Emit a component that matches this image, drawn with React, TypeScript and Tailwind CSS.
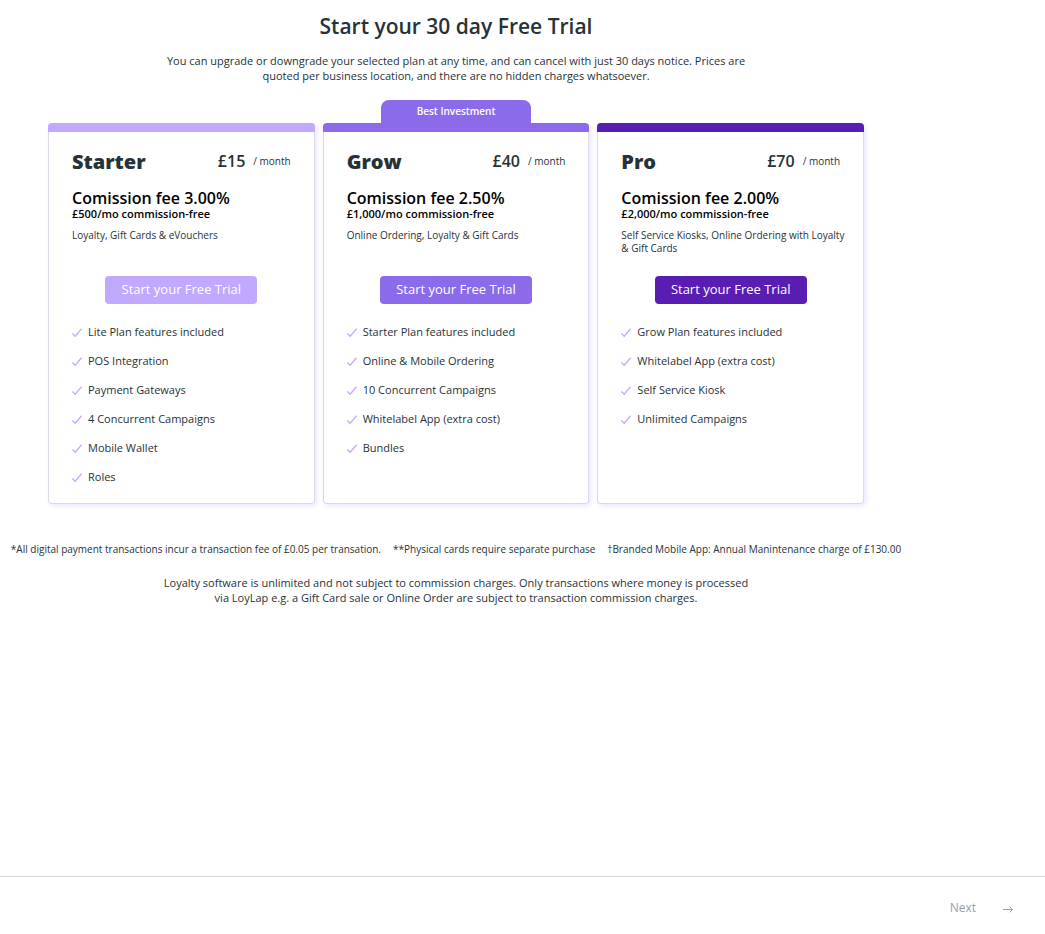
type Plan = {
  name: string;
  price: string;
  fee: string;
  allowance: string;
  summary: string;
  features: string[];
  bar: string;
  button: string;
  badge?: string;
};

const plans: Plan[] = [
  {
    name: "Starter",
    price: "£15",
    fee: "Comission fee 3.00%",
    allowance: "£500/mo commission-free",
    summary: "Loyalty, Gift Cards & eVouchers",
    features: [
      "Lite Plan features included",
      "POS Integration",
      "Payment Gateways",
      "4 Concurrent Campaigns",
      "Mobile Wallet",
      "Roles",
    ],
    bar: "bg-[#c1a9ff]",
    button: "bg-[#c1a9ff]",
  },
  {
    name: "Grow",
    price: "£40",
    fee: "Comission fee 2.50%",
    allowance: "£1,000/mo commission-free",
    summary: "Online Ordering, Loyalty & Gift Cards",
    features: [
      "Starter Plan features included",
      "Online & Mobile Ordering",
      "10 Concurrent Campaigns",
      "Whitelabel App (extra cost)",
      "Bundles",
    ],
    bar: "bg-[#8c6bea]",
    button: "bg-[#8c6bea]",
    badge: "Best Investment",
  },
  {
    name: "Pro",
    price: "£70",
    fee: "Comission fee 2.00%",
    allowance: "£2,000/mo commission-free",
    summary: "Self Service Kiosks, Online Ordering with Loyalty & Gift Cards",
    features: [
      "Grow Plan features included",
      "Whitelabel App (extra cost)",
      "Self Service Kiosk",
      "Unlimited Campaigns",
    ],
    bar: "bg-[#591db1]",
    button: "bg-[#591db1]",
  },
];

function Check() {
  return (
    <svg className="h-[10px] w-[10px] shrink-0" viewBox="0 0 10 10" fill="none" aria-hidden="true">
      <path d="M0.4 5.4 3.2 8.2 9.6 0.6" stroke="#c1a9ff" strokeWidth="1.3" />
    </svg>
  );
}

function PlanCard({ plan }: { plan: Plan }) {
  return (
    <article className="relative flex flex-1 flex-col rounded border border-t-0 border-[#d8dae6] shadow-[2px_2px_5px_rgba(193,169,255,0.3)]">
      {plan.badge && (
        <div className="absolute bottom-full left-1/2 flex h-[23px] w-[150px] -translate-x-1/2 items-center justify-center rounded-t-lg bg-[#8c6bea] text-[10px] font-semibold text-white">
          {plan.badge}
        </div>
      )}
      <div className={`-mx-px h-[9px] rounded-t ${plan.bar}`} />
      <div className="px-[23px] pt-[18px] pb-[11px]">
        <div className="flex items-start justify-between">
          <h2 className="text-[20px] leading-6 font-extrabold">{plan.name}</h2>
          <p className="flex items-center gap-2 leading-[22px]">
            <span className="text-[16px] font-semibold">{plan.price}</span>
            <span className="text-[10px]">/ month</span>
          </p>
        </div>
        <p className="mt-[14px] text-[16px] leading-5 font-semibold text-black">{plan.fee}</p>
        <p className="text-[11px] leading-3 font-semibold text-black">{plan.allowance}</p>
        <p className="-mr-2 mt-[9px] h-[26px] text-[10px] leading-[13px]">{plan.summary}</p>
        <button
          type="button"
          className={`mx-auto mt-[21px] block h-7 w-[152px] rounded text-[13px] text-white ${plan.button}`}
        >
          Start your Free Trial
        </button>
        <ul className="mt-[14px]">
          {plan.features.map((feature) => (
            <li key={feature} className="flex h-[29px] items-center gap-[6px] text-[11px]">
              <Check />
              {feature}
            </li>
          ))}
        </ul>
      </div>
    </article>
  );
}

export default function App() {
  return (
    <div className="flex min-h-screen flex-col bg-white font-['Open_Sans',sans-serif] text-[#263238]">
      <main className="w-full max-w-[912px] flex-1 px-6 pt-3">
        <h1 className="text-center text-[21px] leading-7 font-semibold">Start your 30 day Free Trial</h1>
        <p className="mx-auto mt-[13px] max-w-[600px] text-center text-[11px] leading-[15px]">
          You can upgrade or downgrade your selected plan at any time, and can cancel with just 30 days notice. Prices are
          quoted per business location, and there are no hidden charges whatsoever.
        </p>
        <section className="mx-6 mt-10 flex gap-2">
          {plans.map((plan) => (
            <PlanCard key={plan.name} plan={plan} />
          ))}
        </section>
        <div className="mt-[38px] flex justify-center gap-3 text-[10px] leading-[14px] whitespace-nowrap">
          <span>*All digital payment transactions incur a transaction fee of £0.05 per transation.</span>
          <span>**Physical cards require separate purchase</span>
          <span>†Branded Mobile App: Annual Manintenance charge of £130.00</span>
        </div>
        <p className="mx-auto mt-[19px] max-w-[600px] text-center text-[11px] leading-[15px]">
          Loyalty software is unlimited and not subject to commission charges. Only transactions where money is processed
          via LoyLap e.g. a Gift Card sale or Online Order are subject to transaction commission charges.
        </p>
      </main>
      <footer className="flex h-[58px] items-center justify-end border-t border-[#d4d6d7] px-8">
        <button type="button" className="flex items-center gap-[27px] pt-[5px] text-[12px] text-[#90a4ae]">
          Next
          <svg className="mt-[2px] h-[7px] w-[10px]" viewBox="0 0 10 7" fill="none" aria-hidden="true">
            <path d="M0 3.5H9.4M6.6 0.6 9.5 3.5 6.6 6.4" stroke="#90a4ae" />
          </svg>
        </button>
      </footer>
    </div>
  );
}
